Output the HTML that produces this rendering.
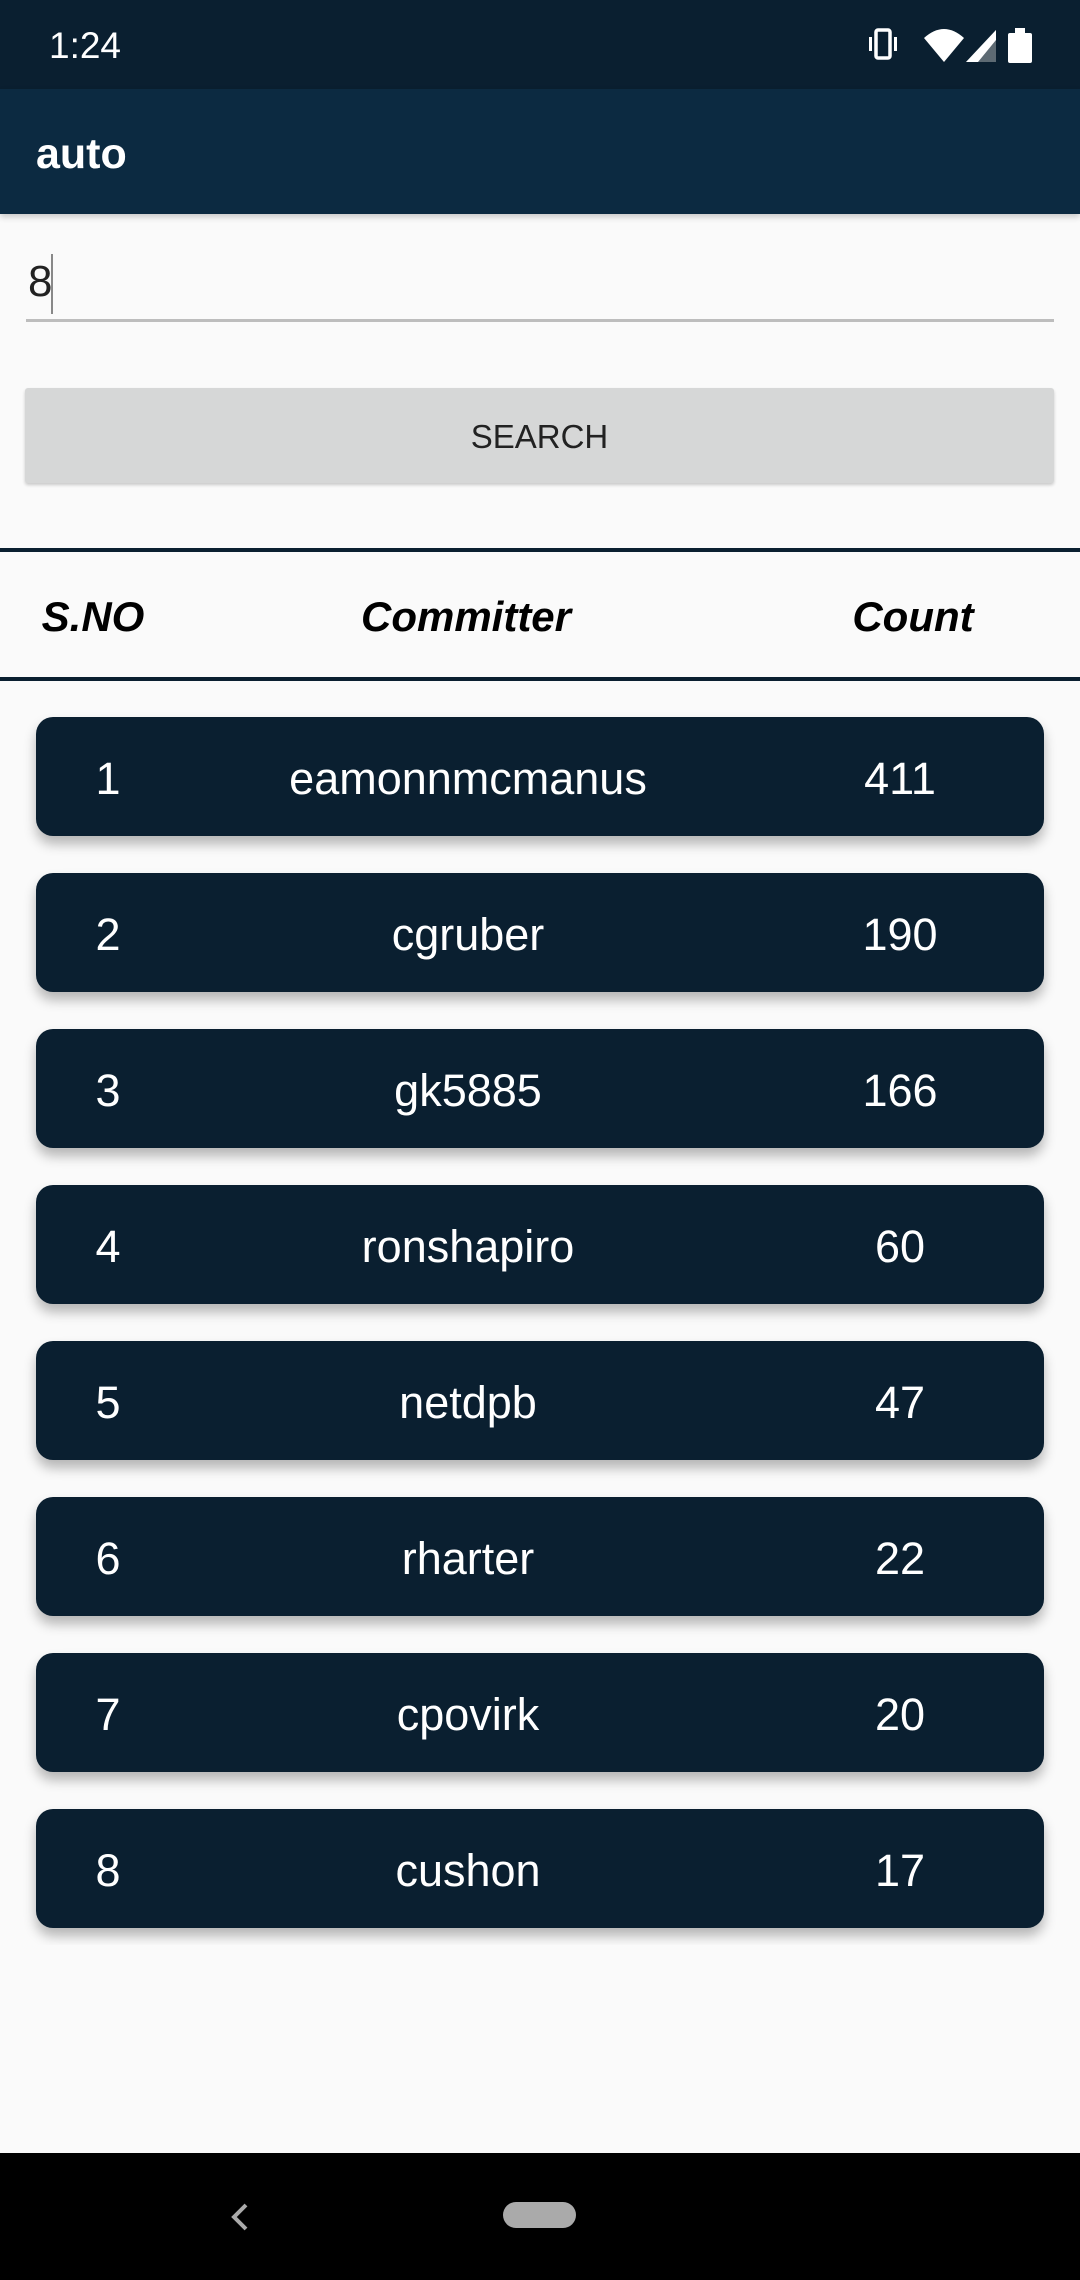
<!DOCTYPE html>
<html><head><meta charset="utf-8"><style>
*{margin:0;padding:0;box-sizing:border-box}
body{width:1080px;height:2280px;background:#fafafa;font-family:"Liberation Sans",sans-serif;position:relative;overflow:hidden}
.sb{position:absolute;left:0;top:0;width:1080px;height:89px;background:#0a1f30;color:#fff}
.ab{position:absolute;left:0;top:89px;width:1080px;height:125px;background:#0c2a41;box-shadow:0 3px 6px rgba(0,0,0,.2)}
.ab span{position:absolute;left:36px;top:41px;font-size:43px;color:#fff;font-weight:bold}
.inp{position:absolute;left:28px;top:257px;font-size:44px;color:#222}
.cur{position:absolute;left:51px;top:254px;width:2px;height:60px;background:#888}
.ul{position:absolute;left:26px;top:319px;width:1028px;height:3px;background:#bdbdbd}
.btn{position:absolute;left:25px;top:388px;width:1029px;height:95px;background:#d6d7d7;border-radius:3px;box-shadow:0 2px 3px rgba(0,0,0,.2);text-align:center;line-height:97px;font-size:33px;color:#222}
.ln{position:absolute;left:0;width:1080px;height:4px;background:#0a1f30}
.hd{position:absolute;top:593px;font-size:42px;font-weight:bold;font-style:italic;color:#000;transform:translateX(-50%)}
.list{position:absolute;left:0;top:690px;width:1080px;height:1255px;overflow:hidden}
.card{position:absolute;left:36px;width:1008px;height:119px;background:#0a1f30;border-radius:17px;box-shadow:0 8px 12px rgba(0,0,0,.28);color:#fff;font-size:45px}
.card span{position:absolute;top:36px;transform:translateX(-50%);white-space:nowrap}
.nav{position:absolute;left:0;top:2153px;width:1080px;height:127px;background:#000}
</style></head><body>
<div class="sb">
<div style="position:absolute;left:49px;top:25px;font-size:37px">1:24</div>
<svg style="position:absolute;left:866px;top:26px" width="170" height="38" viewBox="0 0 170 38">
<rect x="10" y="4" width="14" height="28" rx="2" fill="none" stroke="#fff" stroke-width="3.5"/>
<rect x="3" y="11" width="3" height="14" fill="#fff"/><rect x="28" y="11" width="3" height="14" fill="#fff"/>
<path d="M58 12 Q78 -6 98 12 L78 36 Z" fill="#fff"/>
<path d="M100 36 L130 4 L130 36 Z" fill="#5d6a73"/><path d="M100 36 L130 4 L130 14 L112 36 Z" fill="#fff"/>
<rect x="142" y="7" width="24" height="30" rx="2" fill="#fff"/><rect x="149" y="2" width="10" height="6" fill="#fff"/>
</svg>
</div>
<div class="ab"><span>auto</span></div>
<div class="inp">8</div><div class="cur"></div><div class="ul"></div>
<div class="btn">SEARCH</div>
<div class="ln" style="top:548px"></div>
<div class="hd" style="left:93px">S.NO</div>
<div class="hd" style="left:466px">Committer</div>
<div class="hd" style="left:913px">Count</div>
<div class="ln" style="top:677px"></div>
<div class="list">
<div class="card" style="top:27px"><span style="left:72px">1</span><span style="left:432px">eamonnmcmanus</span><span style="left:864px">411</span></div>
<div class="card" style="top:183px"><span style="left:72px">2</span><span style="left:432px">cgruber</span><span style="left:864px">190</span></div>
<div class="card" style="top:339px"><span style="left:72px">3</span><span style="left:432px">gk5885</span><span style="left:864px">166</span></div>
<div class="card" style="top:495px"><span style="left:72px">4</span><span style="left:432px">ronshapiro</span><span style="left:864px">60</span></div>
<div class="card" style="top:651px"><span style="left:72px">5</span><span style="left:432px">netdpb</span><span style="left:864px">47</span></div>
<div class="card" style="top:807px"><span style="left:72px">6</span><span style="left:432px">rharter</span><span style="left:864px">22</span></div>
<div class="card" style="top:963px"><span style="left:72px">7</span><span style="left:432px">cpovirk</span><span style="left:864px">20</span></div>
<div class="card" style="top:1119px"><span style="left:72px">8</span><span style="left:432px">cushon</span><span style="left:864px">17</span></div>
</div>
<div class="nav">
<svg style="position:absolute;left:228px;top:48px" width="24" height="32" viewBox="0 0 24 32"><path d="M18 4 L6 16 L18 28" fill="none" stroke="#aaa" stroke-width="4"/></svg>
<div style="position:absolute;left:503px;top:49px;width:73px;height:26px;border-radius:13px;background:#aaa"></div>
</div>
</body></html>
